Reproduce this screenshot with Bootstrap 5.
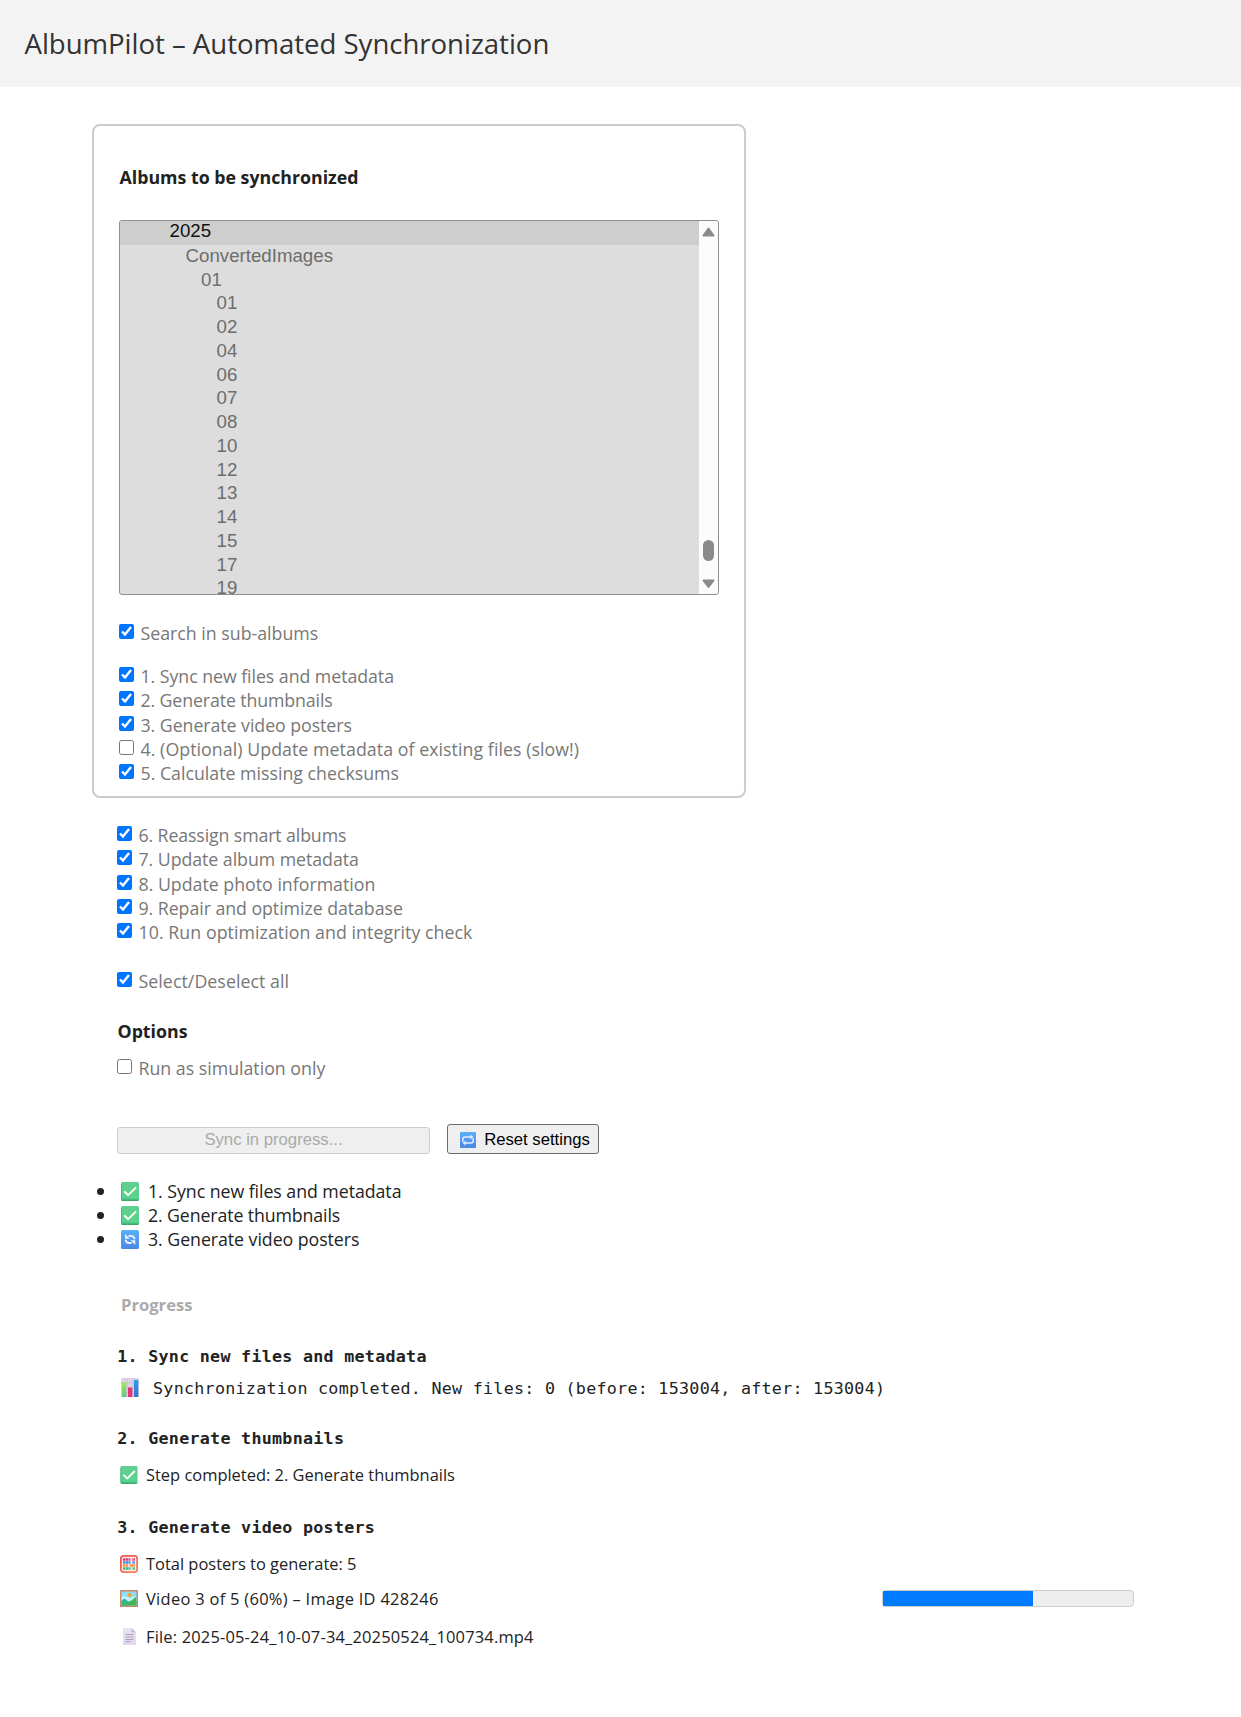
<!DOCTYPE html>
<html lang="en">
<head>
<meta charset="utf-8">
<meta name="viewport" content="width=device-width, initial-scale=1">
<title>AlbumPilot – Automated Synchronization</title>
<link rel="stylesheet" href="https://cdn.jsdelivr.net/npm/bootstrap@5.3.0/dist/css/bootstrap.min.css">
<style>
  body { font-family: "Open Sans", "Noto Sans", sans-serif; font-size: 17.75px; line-height: 24.3px; color: #222; background: #fff; }
  .page-head { height: 87px; background: #f3f3f3; padding: 0 24.5px 1px; }
  .page-head h1 { font-size: 27.6px; line-height: 36px; font-weight: 400; color: #333; letter-spacing: -.04px; }
  .sync-main { padding: 37px 0 0 92px; }
  .album-box { width: 654px; height: 674px; border: 2px solid #ccc; border-radius: 8px; padding: 39px 25px 0; }
  .section-title { font-size: 17.75px; line-height: 24.3px; font-weight: 700; margin: 0; padding-left: .5px; }
  .album-list { height: 375px; margin-top: 30.7px; border: 1px solid #8f8f8f; border-radius: 3px; background: #ddd; overflow: hidden; }
  .album-list ul { font: 18.7px/21px "Liberation Sans", Arial, sans-serif; color: #6d6d6d; }
  .album-list li { height: 23.75px; padding-left: 96.5px; white-space: nowrap; }
  .album-list .lvl-0 { height: 24px; line-height: 20px; padding-left: 49.5px; background: #cecece; color: #101010; }
  .album-list .lvl-1 { padding-left: 65.5px; }
  .album-list .lvl-2 { padding-left: 81px; }
  .album-scroll { width: 19px; background: #fcfcfc; }
  .opt-row { height: 24.3px; color: #777; white-space: nowrap; }
  .opt-row input { width: 15px; height: 15px; margin: 3px 6.5px 0 0; accent-color: #0075ff; flex: none; }
  .sub-row { margin-top: 26px; }
  .step-rows { margin-top: 18.7px; }
  .all-row { margin-top: 25px; }
  .options-title { margin-top: 25.4px; }
  .sim-row { margin-top: 12.7px; }
  .fit-tight { letter-spacing: -.12px; }
  .fit-snug { letter-spacing: -.05px; }
  .fit-wide { letter-spacing: .06px; }
  .after-box { padding: 25px 0 0 25px; }
  .btn-native { font: 16.7px/20px "Liberation Sans", Arial, sans-serif; background: #efefef; border: 1px solid #6b6b6b; border-radius: 3px; color: #000; padding: 0; }
  .btn-sync { width: 313px; height: 27px; border-color: #cdcdcd; color: #aaa; padding-bottom: 1px; }
  .btn-reset { width: 152px; height: 30px; margin-left: 17px; padding-top: 1px; }
  .actions { margin-top: 43.7px; }
  .step-list { margin-top: 25px; line-height: 24px; }
  .step-list li { height: 24px; padding-left: 5px; }
  .dot { width: 7px; height: 7px; border-radius: 50%; background: #222; margin: 9px 17px 0 0; }
  .step-list svg { margin: 3px 9px 0 0; }
  .progress-title { font-size: 16.6px; line-height: 24px; font-weight: 700; color: #aaa; margin: 42px 0 0 29px; }
  .log { margin-left: 25px; line-height: 24px; }
  .log-head, .log-mono { font-family: "DejaVu Sans Mono", "Liberation Mono", monospace; font-size: 16.7px; letter-spacing: .267px; height: 24px; line-height: 22px; margin: 0; white-space: nowrap; }
  .log-head { font-weight: 700; padding-left: .3px; }
  .log-line { font-size: 16.45px; height: 24px; white-space: nowrap; }
  .log-line svg { margin: 3px 8px 0 3px; }
  .log-mono svg { margin: 1px 14.5px 0 3.5px; }
  .video-bar { width: 252px; height: 17px; border: 1px solid #ccc; border-radius: 4px; background: #eee; margin: 3px 0 0 auto; }
  .video-bar .progress-bar { background: #007bff; }
  .video-line { width: 1017px; }
  .fit-video { letter-spacing: .3px; }
  .fit-file { letter-spacing: .18px; }
  .gap-a { margin-top: 27.5px; } .gap-b { margin-top: 8px; } .gap-c { margin-top: 26px; }
  .gap-d { margin-top: 12px; } .gap-e { margin-top: 29px; } .gap-f { margin-top: 11px; } .gap-g { margin-top: 14px; }
</style>
</head>
<body>
<svg width="0" height="0" class="position-absolute" aria-hidden="true">
  <defs>
    <linearGradient id="green" x2="0" y2="1"><stop offset="0" stop-color="#62cf91"/><stop offset=".85" stop-color="#55d48b"/><stop offset="1" stop-color="#3c9a68"/></linearGradient>
    <linearGradient id="blue" x2="0" y2="1"><stop offset="0" stop-color="#59b0fb"/><stop offset="1" stop-color="#4a86e4"/></linearGradient>
    <linearGradient id="barG" x2="0" y2="1"><stop offset="0" stop-color="#a5e65c"/><stop offset="1" stop-color="#5fc878"/></linearGradient>
    <linearGradient id="barB" x2="0" y2="1"><stop offset="0" stop-color="#2c9cf0"/><stop offset="1" stop-color="#3f74c6"/></linearGradient>
    <linearGradient id="frameR" x2="1" y2="1"><stop offset="0" stop-color="#f0524a"/><stop offset="1" stop-color="#f7855a"/></linearGradient>
    <linearGradient id="paper" x2="0" y2="1"><stop offset="0" stop-color="#e9e3f2"/><stop offset="1" stop-color="#e2d6f0"/></linearGradient>
  </defs>
  <symbol id="i-check" viewBox="0 0 18 19">
    <rect width="18" height="19" rx="1.5" fill="url(#green)"/><path d="M.5 2v15.500" stroke="#49b57b" stroke-width="1"/>
    <path d="M3.700 9.800 7.200 13.200 14.600 5.800" fill="none" stroke="#fff" stroke-width="1.900" stroke-linecap="round" stroke-linejoin="round"/>
  </symbol>
  <symbol id="i-cycle" viewBox="0 0 18 19">
    <rect width="18" height="19" rx="1.500" fill="url(#blue)"/>
    <path d="M7.500 6h2.700a3.300 3.300 0 0 1 3.300 3.300M10.500 13H8a3.300 3.300 0 0 1-3.300-3.300" fill="none" stroke="#f1efff" stroke-width="1.900"/>
    <path d="M4 4v4.800h4.800zM14.200 15v-4.800H9.400z" fill="#f1efff"/>
  </symbol>
  <symbol id="i-repeat" viewBox="0 0 16 16">
    <rect width="16" height="16" rx="1" fill="url(#blue)"/>
    <path d="M2.800 9.700V7.300A2.300 2.300 0 0 1 5 5h7M13.200 6.300v2.400A2.300 2.300 0 0 1 11 11H4" fill="none" stroke="#e6ecff" stroke-width="1.500"/>
    <path d="M10.500 2.600v4.800L13.400 5zM5.500 8.600v4.800L2.600 11z" fill="#e6ecff"/>
  </symbol>
  <symbol id="i-chart" viewBox="0 0 18 19">
    <rect width="18" height="19" rx="1" fill="#d9d4e3"/><path d="M0 5h18M0 10h18M0 15h18M6 0v19M12 0v19" stroke="#bfb9cd" stroke-width=".7"/>
    <rect x="1" y="4.500" width="4.300" height="14.500" fill="url(#barG)"/><rect x="7" y="9.500" width="4.300" height="9.500" fill="#e63474"/><rect x="13" y="2" width="4.300" height="17" fill="url(#barB)"/>
  </symbol>
  <symbol id="i-abacus" viewBox="0 0 18 18">
    <rect x=".9" y=".9" width="16.200" height="16.200" rx="2.500" fill="#fbe9ec" stroke="url(#frameR)" stroke-width="1.800"/>
    <g fill="none" stroke-width="2.300"><path d="M3 4.500h7.500M12.300 4.500h2.700" stroke="#e0427e"/><path d="M3 7.500h7.500M12.300 7.500h2.700" stroke="#478fe0"/><path d="M3 10.500h5M9.800 10.500h5.200" stroke="#f59a3a"/><path d="M3 13.500h7.500M12.300 13.500h2.700" stroke="#45b880"/></g>
    <path d="M5.500 3v12M8.500 3v12M13.700 3v12" stroke="#fbe9ec" stroke-width=".4"/>
  </symbol>
  <symbol id="i-picture" viewBox="0 0 18 17">
    <rect width="18" height="17" rx=".5" fill="#cb8a63"/><rect x="1.500" y="1.500" width="15" height="14" fill="#8edcf6"/>
    <path d="M1.500 7c1.200-1.500 3-1.500 4 0 2-.8 4 0 4.500 1.500 2-2 4.500-2.500 6.500-1.500v4h-15z" fill="#c6effc"/>
    <circle cx="9.700" cy="5" r="2" fill="#f5a623"/>
    <path d="M1.500 10.500 4.500 8.500l6 5-2 2h-7z" fill="#2fb98a"/><path d="M3 15.500c2-3 5-3.500 7.500-4.500 2.500-1.200 3.500-3.200 6-4v8.500z" fill="#42b55b"/>
  </symbol>
  <symbol id="i-page" viewBox="0 0 18 17">
    <path d="M3 0h8.500L16 4.500V17H3z" fill="url(#paper)"/><path d="M11.500 0 16 4.500h-4.500z" fill="#c4b8d4"/>
    <path d="M5.500 6.500h8M5.500 9h8M5.500 11.500h8M5.500 13.700h5" stroke="#aaa0b8" stroke-width="1"/>
  </symbol>
</svg>

<header class="page-head d-flex align-items-center">
  <h1 class="m-0">AlbumPilot – Automated Synchronization</h1>
</header>

<main class="sync-main">
  <section class="album-box">
    <h2 class="section-title">Albums to be synchronized</h2>
    <div class="album-list d-flex">
      <ul class="list-unstyled flex-grow-1 m-0">
        <li class="lvl-0">2025</li><li class="lvl-1">ConvertedImages</li><li class="lvl-2">01</li>
        <li>01</li><li>02</li><li>04</li><li>06</li><li>07</li><li>08</li><li>10</li><li>12</li><li>13</li><li>14</li><li>15</li><li>17</li><li>19</li>
      </ul>
      <div class="album-scroll">
        <svg class="d-block" width="19" height="373" viewBox="0 0 19 373" fill="#8b8b8b" stroke="#8b8b8b" stroke-linejoin="round">
          <path d="M9.500 7.500 14.500 14.500H4.500z" stroke-width="2"/>
          <rect x="4" y="319" width="11" height="21" rx="5.500" stroke="none"/>
          <path d="M4.500 359.500h10l-5 6.500z" stroke-width="2"/>
        </svg>
      </div>
    </div>
    <label class="opt-row sub-row d-flex align-items-start"><input type="checkbox" checked>Search in sub-albums</label>
    <div class="step-rows">
      <label class="opt-row d-flex align-items-start fit-snug"><input type="checkbox" checked>1. Sync new files and metadata</label>
      <label class="opt-row d-flex align-items-start fit-tight"><input type="checkbox" checked>2. Generate thumbnails</label>
      <label class="opt-row d-flex align-items-start fit-snug"><input type="checkbox" checked>3. Generate video posters</label>
      <label class="opt-row d-flex align-items-start fit-wide"><input type="checkbox">4. (Optional) Update metadata of existing files (slow!)</label>
      <label class="opt-row d-flex align-items-start"><input type="checkbox" checked>5. Calculate missing checksums</label>
    </div>
  </section>

  <section class="after-box">
    <label class="opt-row d-flex align-items-start fit-tight"><input type="checkbox" checked>6. Reassign smart albums</label>
    <label class="opt-row d-flex align-items-start fit-snug"><input type="checkbox" checked>7. Update album metadata</label>
    <label class="opt-row d-flex align-items-start"><input type="checkbox" checked>8. Update photo information</label>
    <label class="opt-row d-flex align-items-start fit-snug"><input type="checkbox" checked>9. Repair and optimize database</label>
    <label class="opt-row d-flex align-items-start fit-wide"><input type="checkbox" checked>10. Run optimization and integrity check</label>
    <label class="opt-row all-row d-flex align-items-start fit-wide"><input type="checkbox" checked>Select/Deselect all</label>
    <h2 class="section-title options-title">Options</h2>
    <label class="opt-row sim-row d-flex align-items-start"><input type="checkbox">Run as simulation only</label>
    <div class="actions d-flex align-items-end">
      <button class="btn-native btn-sync" disabled>Sync in progress...</button>
      <button class="btn-native btn-reset d-flex align-items-center justify-content-center"><svg width="16" height="16" class="ms-1 me-2"><use href="#i-repeat"/></svg>Reset settings</button>
    </div>
  </section>

  <ul class="step-list list-unstyled mb-0">
    <li class="d-flex align-items-start fit-snug"><span class="dot"></span><svg width="18" height="19"><use href="#i-check"/></svg>1. Sync new files and metadata</li>
    <li class="d-flex align-items-start fit-tight"><span class="dot"></span><svg width="18" height="19"><use href="#i-check"/></svg>2. Generate thumbnails</li>
    <li class="d-flex align-items-start fit-snug"><span class="dot"></span><svg width="18" height="19"><use href="#i-cycle"/></svg>3. Generate video posters</li>
  </ul>

  <h2 class="progress-title">Progress</h2>
  <section class="log">
    <h3 class="log-head gap-a">1. Sync new files and metadata</h3>
    <div class="log-mono d-flex align-items-start gap-b"><svg width="18" height="19"><use href="#i-chart"/></svg>Synchronization completed. New files: 0 (before: 153004, after: 153004)</div>
    <h3 class="log-head gap-c">2. Generate thumbnails</h3>
    <div class="log-line d-flex align-items-start gap-d"><svg width="18" height="18"><use href="#i-check"/></svg>Step completed: 2. Generate thumbnails</div>
    <h3 class="log-head gap-e">3. Generate video posters</h3>
    <div class="log-line d-flex align-items-start gap-d"><svg width="18" height="18"><use href="#i-abacus"/></svg>Total posters to generate: 5</div>
    <div class="log-line video-line d-flex align-items-start gap-f"><svg width="18" height="17"><use href="#i-picture"/></svg><span class="fit-video">Video 3 of 5 (60%) – Image ID 428246</span>
      <div class="video-bar d-flex"><div class="progress-bar" style="width:60%"></div></div>
    </div>
    <div class="log-line d-flex align-items-start gap-g"><svg width="18" height="17"><use href="#i-page"/></svg><span class="fit-file">File: 2025-05-24_10-07-34_20250524_100734.mp4</span></div>
  </section>
</main>
<script src="https://cdn.jsdelivr.net/npm/bootstrap@5.3.0/dist/js/bootstrap.bundle.min.js"></script>
</body>
</html>
